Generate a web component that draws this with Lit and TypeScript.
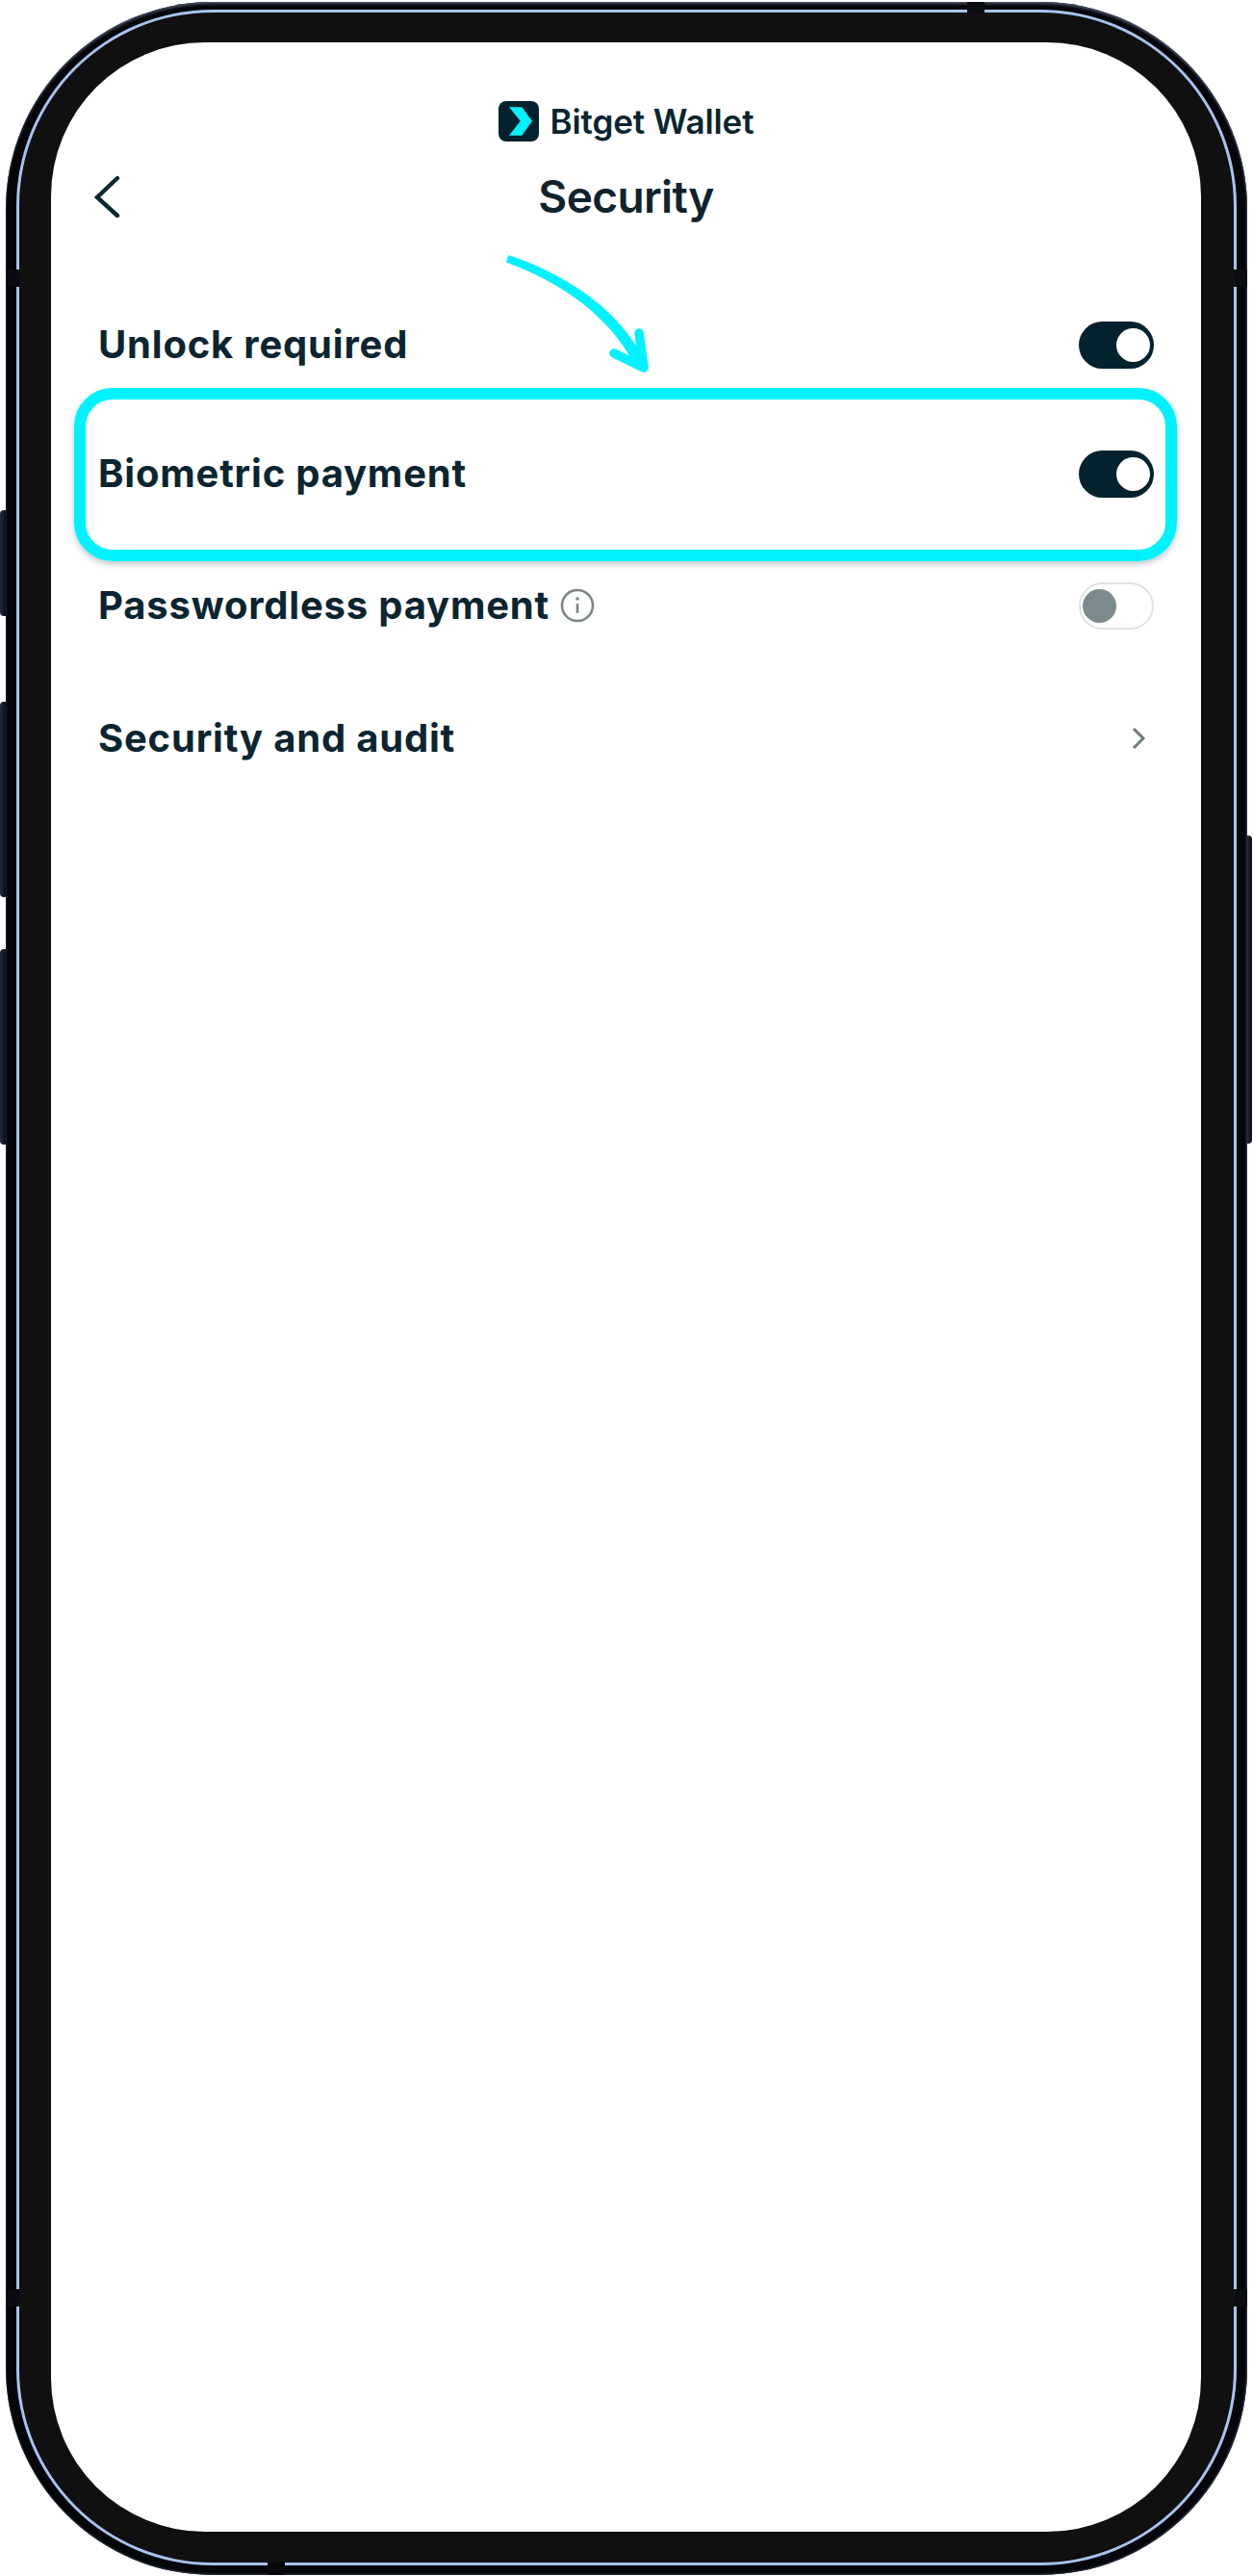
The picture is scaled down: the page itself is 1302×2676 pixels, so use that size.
import { LitElement, html, css, svg } from "lit";
import { customElement } from "lit/decorators.js";

const rows = [
  { key: "unlock", label: "Unlock required", kind: "on" },
  { key: "bio", label: "Biometric payment", kind: "on" },
  { key: "pass", label: "Passwordless payment", kind: "off", info: true },
  { key: "audit", label: "Security and audit", kind: "link" },
];

@customElement("app-root")
export class AppRoot extends LitElement {
  static styles = css`
    :host {
      display: block;
      width: 1302px;
      height: 2676px;
      background: #fff;
      overflow: hidden;
      font-family: "Inter", "Liberation Sans", sans-serif;
      color: #0b2530;
    }
    .stage { padding: 2px 6px 1px 6px; height: 2676px; box-sizing: border-box; }
    .shell {
      position: relative;
      box-sizing: border-box;
      height: 100%;
      padding: 8px 11px 10px 11px;
      border-radius: 215px;
      background: #05060a;
      box-shadow:
        inset 0 3px 3px -1px #4b5366,
        inset -1px 0 2px #2b3240,
        inset 0 -1px 2px #2b3240;
    }
    .ring {
      box-sizing: border-box;
      height: 100%;
      padding: 3px;
      border-radius: 204px;
      background: #a9c3ee;
    }
    .bezel {
      box-sizing: border-box;
      height: 100%;
      padding: 31px 34px 32px 33px;
      border-radius: 201px;
      background: #101011;
    }
    .screen {
      position: relative;
      box-sizing: border-box;
      height: 100%;
      padding-top: 61px;
      border-radius: 160px;
      background: #fff;
      overflow: hidden;
    }
    .btn {
      position: absolute;
      width: 6px;
      background: linear-gradient(90deg, #232a3a, #0d1017);
      border-radius: 4px 0 0 4px;
    }
    .btn.l { left: -6px; }
    .btn.r { right: -5px; border-radius: 0 4px 4px 0; background: linear-gradient(270deg, #0d1017, #232a3a); }
    .b1 { top: 528px; height: 110px; }
    .b2 { top: 727px; height: 203px; }
    .b3 { top: 984px; height: 203px; }
    .b4 { top: 866px; height: 320px; }
    .band { position: absolute; background: #0b0c12; }
    .band.top { left: 999px; top: 0; width: 18px; height: 12px; }
    .band.bot { left: 272px; bottom: 0; width: 18px; height: 13px; background: #08080c; }
    .band.side { width: 14px; height: 18px; }
    .band.sl { left: 0; }
    .band.sr { right: 0; }
    .y1 { top: 278px; }
    .y2 { top: 2376px; }

    .brand { display: flex; justify-content: center; align-items: center; gap: 12px; height: 42px; }
    .brand svg { display: block; }
    .brand span { font-size: 35px; font-weight: 600; letter-spacing: -0.1px; line-height: 42px; }
    .head {
      display: grid;
      grid-template-columns: 1fr auto 1fr;
      align-items: center;
      margin-top: 27px;
      padding: 0 44px;
      height: 60px;
    }
    .head svg { display: block; }
    .title { font-size: 46px; font-weight: 600; line-height: 60px; letter-spacing: -0.6px; color: #10222c; }
    .list { margin-top: 57px; padding: 0 49px 0 49px; }
    .row { display: flex; align-items: center; justify-content: space-between; }
    .row.unlock, .row.bio { height: 134px; }
    .row.pass { height: 140px; }
    .row.audit { height: 136px; }
    .label { display: flex; align-items: center; gap: 11px; font-size: 40px; font-weight: 650; letter-spacing: 0.8px; line-height: 48px; white-space: nowrap; }
    .sw { box-sizing: border-box; position: relative; display: block; width: 78px; height: 49px; border-radius: 25px; background: #04222d; }
    .sw i { position: absolute; width: 35px; height: 35px; border-radius: 50%; top: 7px; right: 4px; background: #fff; }
    .sw.off { background: #fff; border: 2px solid #e1e3e3; }
    .sw.off i { background: #7b8a8c; right: auto; left: 2px; top: 5px; }
    .chev { display: block; margin-right: 9px; }

    .hl {
      position: absolute;
      box-sizing: border-box;
      left: 24px;
      top: 359px;
      width: 1146px;
      height: 180px;
      border: 12px solid #00f2ff;
      border-radius: 40px;
      box-shadow: 0 3px 6px rgba(40, 70, 80, 0.3);
      pointer-events: none;
    }
    .arrow { position: absolute; left: 0; top: 0; pointer-events: none; }
  `;

  private renderControl(kind: string) {
    if (kind === "on") return html`<span class="sw"><i></i></span>`;
    if (kind === "off") return html`<span class="sw off"><i></i></span>`;
    return html`<svg class="chev" width="14" height="24" viewBox="0 0 14 24" fill="none"><path d="M2 2l10 10L2 22" stroke="#6d7a7e" stroke-width="3"/></svg>`;
  }

  render() {
    const info = svg`<circle cx="18" cy="18" r="16" fill="none" stroke="#7a8688" stroke-width="2.6"/><circle cx="18" cy="11" r="1.8" fill="#7a8688"/><path d="M18 16v10" stroke="#7a8688" stroke-width="2.6"/>`;
    return html`
      <div class="stage">
        <div class="shell">
          <div class="btn l b1"></div>
          <div class="btn l b2"></div>
          <div class="btn l b3"></div>
          <div class="btn r b4"></div>
          <div class="ring">
            <div class="bezel">
              <div class="screen">
                <div class="brand">
                  <svg width="42" height="42" viewBox="0 0 42 42">
                    <rect width="42" height="42" rx="8" fill="#04222d"/>
                    <path d="M11 6.3h13.3L35 20.7 24.3 35.7H11l11.7-15z" fill="#00f2ff"/>
                  </svg>
                  <span>Bitget Wallet</span>
                </div>
                <div class="head">
                  <svg width="28" height="44" viewBox="0 0 28 44" fill="none">
                    <path d="M25 3L4 23l21 19" stroke="#0b2a30" stroke-width="4.4" stroke-linecap="round" stroke-linejoin="miter"/>
                  </svg>
                  <div class="title">Security</div>
                  <span></span>
                </div>
                <div class="list">
                  ${rows.map(
                    (r) => html`
                      <div class="row ${r.key}">
                        <div class="label">
                          <span>${r.label}</span>
                          ${r.info ? html`<svg width="36" height="36" viewBox="0 0 36 36">${info}</svg>` : ""}
                        </div>
                        ${this.renderControl(r.kind)}
                      </div>
                    `
                  )}
                </div>
                <div class="hl"></div>
                <svg class="arrow" width="700" height="400" viewBox="53 45 700 400" fill="#00f2ff" stroke="#00f2ff" stroke-width="2" stroke-linejoin="round">
                  <path d="M529.1 267.2C564 279 606 300 635.2 329.8C651 346 663 364 671.3 378.5L662.7 383.5C655 370 645 352 628.8 336.2C600 306 561 285 526.9 272.8Z"/>
                  <path d="M664 347L669 383L638 368" fill="none" stroke-width="9.5" stroke-linecap="round"/>
                </svg>
              </div>
            </div>
          </div>
          <div class="band top"></div>
          <div class="band bot"></div>
          <div class="band side sl y1"></div>
          <div class="band side sr y1"></div>
          <div class="band side sl y2"></div>
          <div class="band side sr y2"></div>
        </div>
      </div>
    `;
  }
}
